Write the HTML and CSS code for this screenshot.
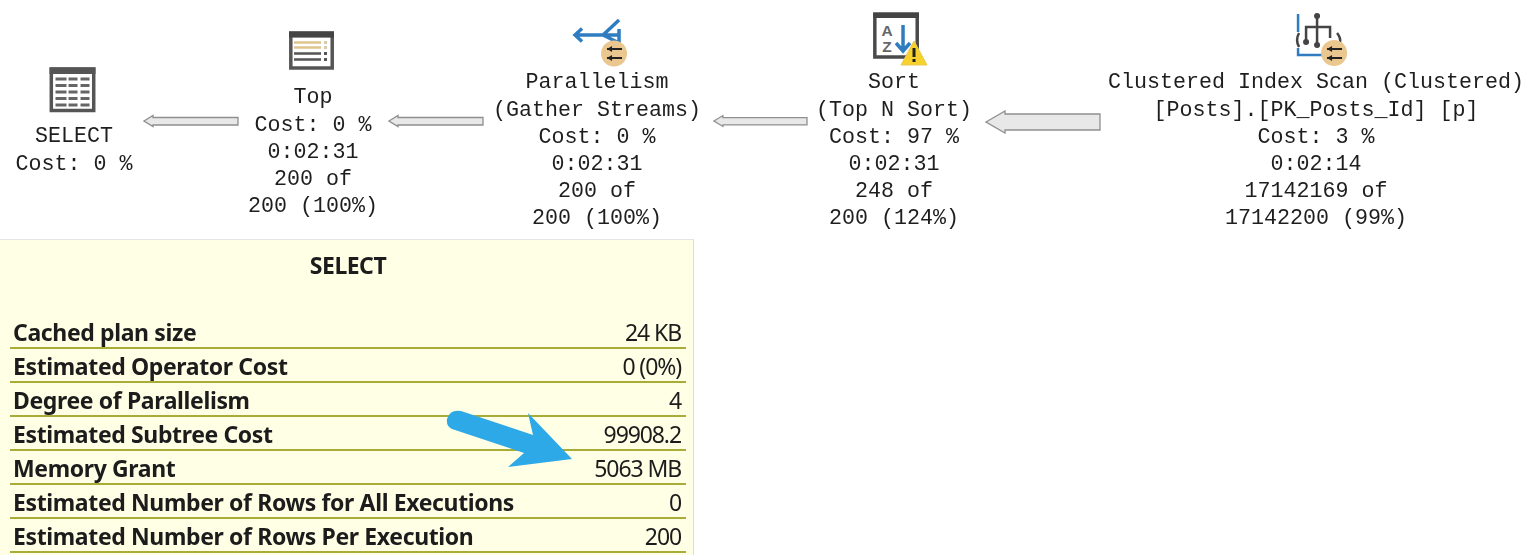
FILE: index.html
```html
<!DOCTYPE html>
<html lang="en">
<head>
<meta charset="utf-8">
<title>Execution plan</title>
<link rel="stylesheet" href="styles.css">
</head>
<body>
<div class="plan">
  <div class="node node-select">
    <svg class="icon" viewBox="0 0 80 60">
      <rect x="17.800" y="7" width="42.400" height="41.500" fill="#fff" stroke="#555" stroke-width="3.500"/>
      <rect x="16" y="5.500" width="46" height="6.500" fill="#555"/>
      <g fill="#666">
        <path d="M22 15.500h11v3H22zM35 15.500h9v3h-9zM47 15.500h9v3h-9zM22 22h11v3H22zM35 22h9v3h-9zM47 22h9v3h-9zM22 28.500h11v3H22zM35 28.500h9v3h-9zM47 28.500h9v3h-9zM22 35h11v3H22zM35 35h9v3h-9zM47 35h9v3h-9zM22 41.500h11v3H22zM35 41.500h9v3h-9zM47 41.500h9v3h-9z"/>
      </g>
    </svg>
    <div>SELECT</div>
    <div>Cost: 0 %</div>
  </div>
  <div class="node node-top">
    <svg class="icon" viewBox="0 0 80 60">
      <rect x="17.800" y="10" width="41.400" height="35" fill="#fff" stroke="#555" stroke-width="3.500"/>
      <rect x="16" y="8.600" width="45" height="6" fill="#444"/>
      <path d="M21 19.500h27M21 24.500h27" stroke="#e0c48e" stroke-width="2.500"/>
      <path d="M21 30.500h27M21 36.500h27" stroke="#555" stroke-width="2.500"/>
      <path d="M51 18h3v3h-3zM51 23h3v3h-3z" fill="#d8ccb0"/>
      <path d="M51 29h3v3h-3zM51 35h3v3h-3z" fill="#555"/>
    </svg>
    <div>Top</div>
    <div>Cost: 0 %</div>
    <div>0:02:31</div>
    <div>200 of</div>
    <div>200 (100%)</div>
  </div>
  <div class="node node-parallel">
    <svg class="icon" viewBox="0 0 80 60">
      <path d="M19 27H62M25 20.500l-7 6.500 7 6.500M46 27 62 12M46 27l16 8V21" fill="none" stroke="#2f7dc0" stroke-width="3.500"/>
      <circle cx="57" cy="45.500" r="13" fill="#eac78f"/>
      <path d="M50 41h15M50 50h15" stroke="#222" stroke-width="2.200"/>
      <path d="M50 41l5-3v6zM50 50l5-3v6z" fill="#222"/>
    </svg>
    <div>Parallelism</div>
    <div>(Gather Streams)</div>
    <div>Cost: 0 %</div>
    <div>0:02:31</div>
    <div>200 of</div>
    <div>200 (100%)</div>
  </div>
  <div class="node node-sort">
    <svg class="icon" viewBox="0 0 80 60">
      <rect x="20.800" y="6" width="42.400" height="43" fill="#fff" stroke="#4a4a4a" stroke-width="3.500"/>
      <rect x="19" y="5" width="46" height="5" fill="#444"/>
      <text class="sort-letter" x="33" y="28">A</text>
      <text class="sort-letter" x="33" y="44">Z</text>
      <path d="M49 17v25M42 35l7 8 7-8" fill="none" stroke="#2f7dc0" stroke-width="3.500"/>
      <path d="M60 33 73 57H47z" fill="#f7d22c" stroke="#e8c850"/>
      <path d="M58.500 40h3v9h-3zM58.500 51h3v3h-3z" fill="#222"/>
    </svg>
    <div>Sort</div>
    <div>(Top N Sort)</div>
    <div>Cost: 97 %</div>
    <div>0:02:31</div>
    <div>248 of</div>
    <div>200 (124%)</div>
  </div>
  <div class="node node-scan">
    <svg class="icon" viewBox="0 0 80 60">
      <path d="M22 6v18M22 40v7h24" fill="none" stroke="#2f7dc0" stroke-width="2.500"/>
      <path d="M41 8v29M30 34V19h24v11" fill="none" stroke="#444" stroke-width="2.500"/>
      <circle cx="41" cy="8" r="3" fill="#444"/>
      <circle cx="30" cy="34" r="3" fill="#444"/>
      <circle cx="41" cy="37" r="3" fill="#444"/>
      <path d="M23 25q-4 7 0 14M61 25q4 5 3 10" fill="none" stroke="#444" stroke-width="2.500"/>
      <circle cx="58" cy="45" r="13" fill="#eac78f"/>
      <path d="M51 41h15M51 50h15" stroke="#222" stroke-width="2.200"/>
      <path d="M51 41l5-3v6zM51 50l5-3v6z" fill="#222"/>
    </svg>
    <div>Clustered Index Scan (Clustered)</div>
    <div>[Posts].[PK_Posts_Id] [p]</div>
    <div>Cost: 3 %</div>
    <div>0:02:14</div>
    <div>17142169 of</div>
    <div>17142200 (99%)</div>
  </div>
  <svg class="flow flow-1" viewBox="0 0 96 14"><path d="M1 7 10 1.500V3.500H95V11H10V12.500Z"/></svg>
  <svg class="flow flow-2" viewBox="0 0 96 14"><path d="M1 7 10 1.500V3.500H95V11H10V12.500Z"/></svg>
  <svg class="flow flow-3" viewBox="0 0 96 14"><path d="M1 7 10 1.500V3.500H95V11H10V12.500Z"/></svg>
  <svg class="flow flow-big" viewBox="0 0 116 24"><path d="M1 12 20 1V4H115V20H20V23Z"/></svg>
</div>
<div class="tooltip">
  <h1 class="tooltip-title">SELECT</h1>
  <div class="rows">
    <div class="row"><span class="label">Cached plan size</span><span class="value">24 KB</span></div>
    <div class="row"><span class="label">Estimated Operator Cost</span><span class="value">0 (0%)</span></div>
    <div class="row"><span class="label">Degree of Parallelism</span><span class="value">4</span></div>
    <div class="row"><span class="label">Estimated Subtree Cost</span><span class="value">99908.2</span></div>
    <div class="row"><span class="label">Memory Grant</span><span class="value">5063 MB</span></div>
    <div class="row"><span class="label">Estimated Number of Rows for All Executions</span><span class="value">0</span></div>
    <div class="row"><span class="label">Estimated Number of Rows Per Execution</span><span class="value">200</span></div>
  </div>
  <svg class="callout" viewBox="0 0 130 70"><path d="M16 3 88 27 83 5 127 51 63 59 79 45 7 21Q1 18 2 11 5 1 16 3Z"/></svg>
</div>
</body>
</html>
```
FILE: styles.css
```css
* {
  box-sizing: border-box;
}

html,
body {
  margin: 0;
  height: 555px;
  overflow: hidden;
  background: #fff;
}

.plan {
  position: relative;
  height: 239px;
  filter: blur(0.45px);
  font-family: "Liberation Mono", monospace;
  font-size: 21.67px;
  line-height: 27.2px;
  color: #1e1e1e;
}

.node {
  position: absolute;
  display: flex;
  flex-direction: column;
  align-items: center;
  white-space: nowrap;
  transform: translateX(-50%);
}

.icon {
  display: block;
  width: 80px;
  height: 60px;
  margin-bottom: 1px;
  flex: none;
}

.node-select {
  left: 74px;
  top: 62.4px;
}

.node-top {
  left: 313px;
  top: 23.4px;
}

.node-parallel {
  left: 597px;
  top: 8.4px;
}

.node-sort {
  left: 894px;
  top: 8.4px;
}

.node-scan {
  left: 1316px;
  top: 8.4px;
}

.sort-letter {
  font-family: "Liberation Sans", sans-serif;
  font-size: 15.5px;
  font-weight: 700;
  fill: #666;
  text-anchor: middle;
}

.flow {
  position: absolute;
}

.flow path {
  fill: #e8e8e8;
  stroke: #8f8f8f;
  stroke-width: 1.3;
}

.flow-1 {
  left: 143px;
  top: 114px;
  width: 96px;
  height: 14px;
}

.flow-2 {
  left: 388px;
  top: 114px;
  width: 96px;
  height: 14px;
}

.flow-3 {
  left: 713px;
  top: 114px;
  width: 95px;
  height: 14px;
}

.flow-big {
  left: 985px;
  top: 110px;
  width: 116px;
  height: 24px;
}

.tooltip {
  position: relative;
  width: 694px;
  height: 316px;
  padding: 0 7px 0 10px;
  background: #ffffe6;
  border-top: 1px solid #e4e4e0;
  border-right: 1px solid #dcdcd8;
  font-family: "Noto Sans", sans-serif;
  color: #1c1c1c;
  filter: blur(0.35px);
}

.tooltip-title {
  margin: 0;
  height: 75.5px;
  padding-top: 8px;
  font-size: 23px;
  letter-spacing: -0.5px;
  line-height: 34px;
  font-weight: 700;
  text-align: center;
}

.rows {
  display: flex;
  flex-direction: column;
}

.row {
  display: flex;
  justify-content: space-between;
  align-items: center;
  height: 33.9px;
  padding: 2px 5px 0 3px;
  border-bottom: 2.6px solid #a9ad38;
}

.label {
  font-size: 23px;
  letter-spacing: -0.37px;
  font-weight: 700;
}

.value {
  font-size: 23px;
  letter-spacing: -1.1px;
  font-weight: 400;
}

.callout {
  position: absolute;
  left: 445px;
  top: 168px;
  width: 130px;
  height: 70px;
}

.callout path {
  fill: #2da9e8;
}
```
